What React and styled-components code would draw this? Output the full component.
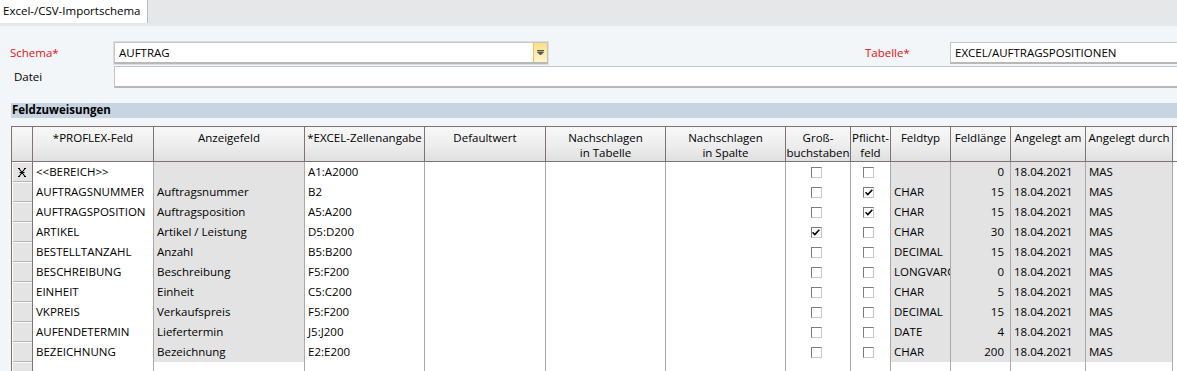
import React from "react";
import styled, { createGlobalStyle } from "styled-components";

const GlobalStyle = createGlobalStyle`
  body {
    margin: 0;
    background: #f3f6f9;
    font-family: "Open Sans", "Noto Sans", sans-serif;
    font-size: 11.5px;
    color: #000;
    overflow: hidden;
  }
`;

const COLS =
  "21px 121px 151px 120px 121px 120px 120px 65px 40px 60px 60px 75px 87px 1fr";

const rows = [
  ["<<BEREICH>>", "", "A1:A2000", false, false, "", "0"],
  ["AUFTRAGSNUMMER", "Auftragsnummer", "B2", false, true, "CHAR", "15"],
  ["AUFTRAGSPOSITION", "Auftragsposition", "A5:A200", false, true, "CHAR", "15"],
  ["ARTIKEL", "Artikel / Leistung", "D5:D200", true, false, "CHAR", "30"],
  ["BESTELLTANZAHL", "Anzahl", "B5:B200", false, false, "DECIMAL", "15"],
  ["BESCHREIBUNG", "Beschreibung", "F5:F200", false, false, "LONGVARCHAR", "0"],
  ["EINHEIT", "Einheit", "C5:C200", false, false, "CHAR", "5"],
  ["VKPREIS", "Verkaufspreis", "F5:F200", false, false, "DECIMAL", "15"],
  ["AUFENDETERMIN", "Liefertermin", "J5:J200", false, false, "DATE", "4"],
  ["BEZEICHNUNG", "Bezeichnung", "E2:E200", false, false, "CHAR", "200"],
];

const headers = [
  ["*PROFLEX-Feld"],
  ["Anzeigefeld"],
  ["*EXCEL-Zellenangabe"],
  ["Defaultwert"],
  ["Nachschlagen", "in Tabelle"],
  ["Nachschlagen", "in Spalte"],
  ["Groß-", "buchstaben"],
  ["Pflicht-", "feld"],
  ["Feldtyp"],
  ["Feldlänge"],
  ["Angelegt am"],
  ["Angelegt durch"],
];

const Page = styled.div`
  width: 1177px;
  height: 371px;
  overflow: hidden;
`;

const TabStrip = styled.div`
  height: 26px;
  background: #e5e7e9;
  display: flex;
  align-items: flex-start;
`;

const Tab = styled.div`
  height: 23px;
  line-height: 22px;
  width: 148px;
  box-sizing: border-box;
  padding-left: 3px;
  background: #fff;
  border-right: 1px solid #b9bcbf;
  white-space: nowrap;
`;

const Form = styled.div`
  padding-top: 16px;
  display: flex;
  flex-direction: column;
  gap: 2px;
`;

const FormRow = styled.div`
  display: flex;
  align-items: center;
  height: 22px;
`;

const Label = styled.div`
  width: ${(p) => p.$width}px;
  padding-left: ${(p) => p.$indent || 0}px;
  margin-left: ${(p) => p.$offset || 0}px;
  box-sizing: border-box;
  color: ${(p) => (p.$required ? "#e81010" : "#000")};
  padding-bottom: 2px;
  flex-shrink: 0;
`;

const Field = styled.div`
  height: 22px;
  box-sizing: border-box;
  background: #fff;
  border: 1px solid #c4c4c4;
  border-bottom: 2px solid #b8b8b8;
  display: flex;
  align-items: center;
  padding-left: 4px;
  flex: ${(p) => (p.$width ? "none" : "1")};
  width: ${(p) => (p.$width ? `${p.$width}px` : "auto")};
  margin-right: ${(p) => (p.$width ? 0 : -20)}px;
  white-space: nowrap;
`;

const Combo = styled(Field)`
  padding-right: 0;
  box-shadow: 0 0 0 1px #dde0e3;
  justify-content: space-between;
`;

const ComboButton = styled.div`
  width: 13px;
  height: 100%;
  border-left: 1px solid #eec55a;
  background: linear-gradient(to bottom, #fbdf84, #fff4cc);
  display: flex;
  align-items: center;
  justify-content: center;
`;

const SectionBar = styled.div`
  margin: 15px 0 0 11px;
  height: 15px;
  line-height: 14px;
  background: #c8d4e2;
  font-weight: bold;
  padding-left: 1px;
`;

const Grid = styled.div`
  margin: 8px 0 0 11px;
  border-left: 1px solid #7e7272;
  border-top: 1px solid #7e7272;
`;

const Row = styled.div`
  display: grid;
  grid-template-columns: ${COLS};
  height: ${(p) => p.$height}px;
`;

const HeadCell = styled.div`
  box-sizing: border-box;
  border-right: ${(p) => (p.$filler ? "none" : "1px solid #7e7272")};
  border-bottom: 1px solid #7e7272;
  background: ${(p) =>
    p.$filler
      ? "#fafbfc"
      : "linear-gradient(to bottom, #f8f8f8 0%, #ededed 55%, #e0e0e0 100%)"};
  text-align: center;
  padding-top: 3px;
  line-height: 15px;
  overflow: hidden;
  white-space: nowrap;
`;

const RowHead = styled.div`
  box-sizing: border-box;
  border-right: 1px solid #7e7272;
  background: #e4e4e4;
  box-shadow: inset 1px 1px 0 #fbfbfb, inset 0 -1px 0 #b4b4b4;
  display: flex;
  align-items: center;
  justify-content: center;
`;

const Cell = styled.div`
  box-sizing: border-box;
  border-right: ${(p) => (p.$filler ? "none" : "1px solid #a9a9a9")};
  background: ${(p) => (p.$gray ? "#e3e3e3" : "#fff")};
  padding: 0 ${(p) => (p.$right ? 6 : 3)}px 0 ${(p) => (p.$right ? 0 : 3)}px;
  text-align: ${(p) => (p.$right ? "right" : "left")};
  line-height: 19px;
  white-space: nowrap;
  overflow: hidden;
`;

const CheckCell = styled(Cell)`
  display: flex;
  align-items: center;
  justify-content: center;
  padding: 0 4px 0 0;
`;

const Box = styled.span`
  width: 11px;
  height: 11px;
  box-sizing: border-box;
  background: #fff;
  border-top: 1px solid #7c7c7c;
  border-left: 1px solid #7c7c7c;
  border-right: 1px solid #c8c8c8;
  border-bottom: 1px solid #c8c8c8;
  display: flex;
  align-items: center;
  justify-content: center;
`;

const Check = ({ checked }) => (
  <Box>
    {checked && (
      <svg width="8" height="7" viewBox="0 0 8 7">
        <path d="M0.5 3.2 L2.8 5.6 L7.3 0.8" stroke="#000" strokeWidth="1.6" fill="none" />
      </svg>
    )}
  </Box>
);

const CurrentMark = () => (
  <svg width="10" height="9" viewBox="0 0 10 9">
    <path
      d="M1 0.5 H3 M7 0.5 H9 M1 8.5 H3 M7 8.5 H9 M2 0.5 L8 8.5 M8 0.5 L2 8.5 M2.5 4.5 H7.5"
      stroke="#000"
      strokeWidth="1.1"
      fill="none"
    />
  </svg>
);

export default function App() {
  return (
    <Page>
      <GlobalStyle />
      <TabStrip>
        <Tab>Excel-/CSV-Importschema</Tab>
      </TabStrip>

      <Form>
        <FormRow>
          <Label $width={114} $indent={10} $required>
            Schema*
          </Label>
          <Combo $width={434}>
            AUFTRAG
            <ComboButton>
              <svg width="7" height="5" viewBox="0 0 7 5">
                <path d="M0 0.5 H7 M0.5 2 H6.5 L3.5 5 Z" stroke="#555" strokeWidth="1" fill="#555" />
              </svg>
            </ComboButton>
          </Combo>
          <Label $width={85} $offset={317} $required>
            Tabelle*
          </Label>
          <Field>EXCEL/AUFTRAGSPOSITIONEN</Field>
        </FormRow>
        <FormRow>
          <Label $width={114} $indent={14}>
            Datei
          </Label>
          <Field />
        </FormRow>
      </Form>

      <SectionBar>Feldzuweisungen</SectionBar>

      <Grid>
        <Row $height={35}>
          <HeadCell />
          {headers.map((lines, i) => (
            <HeadCell key={i}>
              {lines.map((l) => (
                <div key={l}>{l}</div>
              ))}
            </HeadCell>
          ))}
          <HeadCell $filler />
        </Row>

        {rows.map(([feld, anzeige, excel, gross, pflicht, typ, len], i) => (
          <Row key={feld} $height={20}>
            <RowHead>{i === 0 && <CurrentMark />}</RowHead>
            <Cell>{feld}</Cell>
            <Cell $gray>{anzeige}</Cell>
            <Cell>{excel}</Cell>
            <Cell />
            <Cell />
            <Cell />
            <CheckCell>
              <Check checked={gross} />
            </CheckCell>
            <CheckCell>
              <Check checked={pflicht} />
            </CheckCell>
            <Cell $gray>{typ}</Cell>
            <Cell $gray $right>
              {len}
            </Cell>
            <Cell $gray>18.04.2021</Cell>
            <Cell $gray>MAS</Cell>
            <Cell $filler />
          </Row>
        ))}

        <Row $height={20}>
          <RowHead />
          {headers.map((_, i) => (
            <Cell key={i} />
          ))}
          <Cell $filler />
        </Row>
      </Grid>
    </Page>
  );
}
